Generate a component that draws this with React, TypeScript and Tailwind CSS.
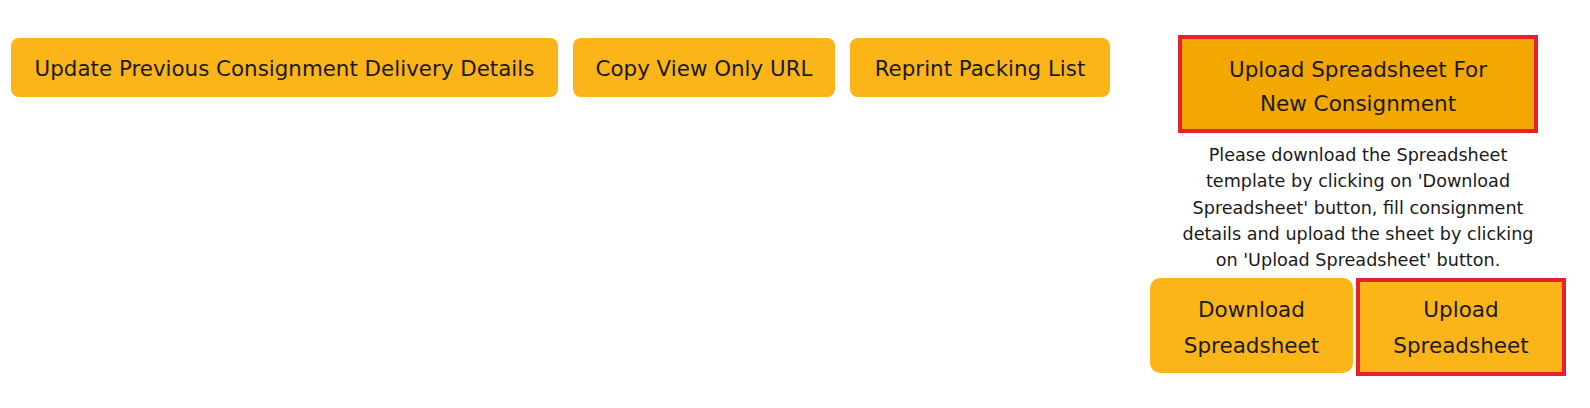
import React from 'react';

const FONT = { fontFamily: '"DejaVu Sans", "Noto Sans", sans-serif' };

const topButtons = [
  { label: 'Update Previous Consignment Delivery Details', w: 'w-[547px]' },
  { label: 'Copy View Only URL', w: 'w-[262px]' },
  { label: 'Reprint Packing List', w: 'w-[260px]' },
];

export default function App() {
  return (
    <div className="min-h-screen bg-white text-[#1a1a1a]" style={FONT}>
      <div className="flex items-start pl-[11px] pt-[35px]">
        {/* Left actions */}
        <div className="flex items-center gap-[15px] pt-[3px]">
          {topButtons.map(b => (
            <button
              key={b.label}
              className={`${b.w} h-[59px] rounded-[8px] bg-[#fbb518] text-[21.4px] pt-[3px] flex items-center justify-center`}
            >
              {b.label}
            </button>
          ))}
        </div>

        {/* Spreadsheet upload */}
        <div className="ml-[40px] w-[416px] flex flex-col items-center">
          <button className="w-[360px] h-[98px] border-[4px] border-[#e6202c] bg-[#f2a800] text-[21.5px] leading-[34px] pt-[6px] flex flex-col items-center justify-center">
            <span>Upload Spreadsheet For</span>
            <span>New Consignment</span>
          </button>
          <p className="mt-[9px] text-center text-[17.6px] leading-[26.3px] whitespace-nowrap">
            Please download the Spreadsheet<br />
            template by clicking on 'Download<br />
            Spreadsheet' button, fill consignment<br />
            details and upload the sheet by clicking<br />
            on 'Upload Spreadsheet' button.
          </p>
          <div className="mt-[5px] w-full flex items-start gap-[3px]">
            <button className="w-[203px] h-[95px] rounded-[10px] bg-[#fbb518] text-[21.5px] leading-[36px] pt-[5px] flex flex-col items-center justify-center">
              <span>Download</span>
              <span>Spreadsheet</span>
            </button>
            <button className="w-[210px] h-[98px] border-[4px] border-[#e6202c] bg-[#fbb518] text-[21.5px] leading-[36px] pt-[2px] flex flex-col items-center justify-center">
              <span>Upload</span>
              <span>Spreadsheet</span>
            </button>
          </div>
        </div>
      </div>
    </div>
  );
}
